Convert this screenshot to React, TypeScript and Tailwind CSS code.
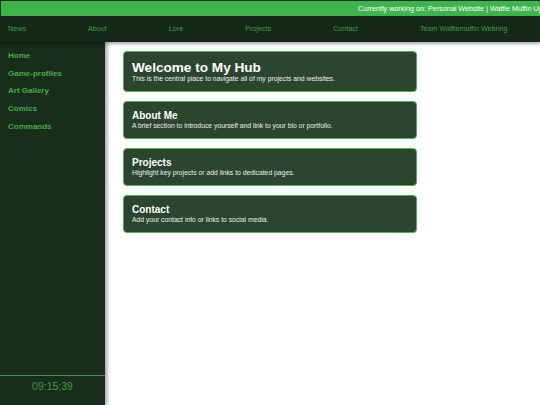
import React from "react";

const navItems = ["News", "About", "Lore", "Projects", "Contact", "Team Wafflemuffin Webring"];
const sideItems = ["Home", "Game-profiles", "Art Gallery", "Comics", "Commands"];
const cards = [
  { t: "Welcome to My Hub", d: "This is the central place to navigate all of my projects and websites.", big: true },
  { t: "About Me", d: "A brief section to introduce yourself and link to your bio or portfolio." },
  { t: "Projects", d: "Highlight key projects or add links to dedicated pages." },
  { t: "Contact", d: "Add your contact info or links to social media." },
];

export default function App() {
  return (
    <div className="w-[540px] h-[405px] overflow-hidden flex flex-col bg-white" style={{ fontFamily: '"Liberation Sans", Arial, sans-serif' }}>
      <div className="h-[16px] shrink-0 bg-[#3db54a] border-t border-l border-[#1b3320] flex items-center overflow-hidden whitespace-nowrap">
        <span className="pl-[357px] text-[7.2px] text-white leading-none">Currently working on: Personal Website | Waffle Muffin Updates</span>
      </div>
      <div className="h-[26px] shrink-0 bg-[#15281a] flex items-center pl-[8px] gap-[62px] relative z-10 shadow-[0_2px_3px_rgba(0,0,0,0.35)]">
        {navItems.map((n) => (
          <span key={n} className="text-[7.2px] text-[#3a9e42] whitespace-nowrap leading-none">{n}</span>
        ))}
      </div>
      <div className="flex flex-1 min-h-0">
        <div className="w-[105px] shrink-0 bg-[#182d1b] flex flex-col relative z-[5] shadow-[2px_0_4px_rgba(0,0,0,0.4)]">
          <div className="flex flex-col pl-[8px] pt-[8px] gap-[6.7px]">
            {sideItems.map((s) => (
              <span key={s} className="text-[8px] font-bold text-[#3fae48] leading-[11px]">{s}</span>
            ))}
          </div>
          <div className="mt-auto border-t border-[#4a8f50] h-[30px] flex items-start pt-[5px] justify-center">
            <span className="text-[10.5px] text-[#3a9e42] leading-none">09:15:39</span>
          </div>
        </div>
        <div className="flex-1 pt-[9px] pl-[18px] flex flex-col gap-[9px]">
          {cards.map((c) => (
            <div key={c.t} className="w-[294px] bg-[#2c452f] border border-[#4fae56] rounded-[4px] px-[8px] pt-[8px] pb-[8px]">
              <div className={`${c.big ? "text-[13.6px] leading-[15px]" : "text-[10px] leading-[12px]"} font-bold text-white`}>{c.t}</div>
              <div className="text-[6.8px] text-[#e8efe8] leading-[8px]">{c.d}</div>
            </div>
          ))}
        </div>
      </div>
    </div>
  );
}
